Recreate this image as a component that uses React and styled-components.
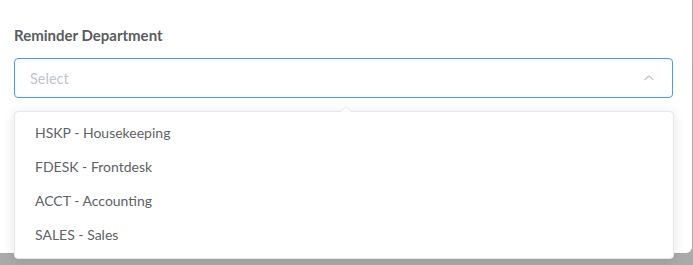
import React, { useState } from 'react';
import styled, { createGlobalStyle } from 'styled-components';

const GlobalStyle = createGlobalStyle`
    html, body {
        margin: 0;
        padding: 0;
        background: #ffffff;
        font-family: Lato, "Open Sans", sans-serif;
    }
`;

const Page = styled.div`
    min-height: 265px;
    background: #aaaaaa;
`;

const Panel = styled.div`
    position: relative;
    width: 692px;
    height: 253px;
    background: #ffffff;
    border-radius: 0 0 6px 0;
    padding: 25px 19px 0 14px;
    box-sizing: border-box;
`;

const Label = styled.div`
    font-size: 15px;
    font-weight: 700;
    color: #5a5c60;
    line-height: 20px;
    margin-bottom: 13px;
`;

const SelectBox = styled.div`
    position: relative;
    height: 40px;
    border: 1px solid ${props => (props.$open ? '#409eff' : '#dcdfe6')};
    border-radius: 4px;
    box-sizing: border-box;
    display: flex;
    align-items: center;
    justify-content: space-between;
    padding: 0 17px 0 15px;
    cursor: pointer;
`;

const Placeholder = styled.span`
    font-size: 14.5px;
    color: #c0c4cc;
`;

const Chevron = styled.svg`
    width: 12px;
    height: 12px;
    color: #c0c4cc;
`;

const Dropdown = styled.ul`
    position: absolute;
    top: 52px;
    left: -1px;
    right: -2px;
    margin: 0;
    padding: 4px 0 6px 0;
    list-style: none;
    background: #ffffff;
    border: 1px solid #e4e7ed;
    border-radius: 4px;
    box-shadow: 0 2px 12px rgba(0, 0, 0, 0.1);
    z-index: 10;

    &::before,
    &::after {
        content: '';
        position: absolute;
        left: 325px;
        width: 0;
        height: 0;
        border: 6px solid transparent;
        border-top-width: 0;
    }
    &::before {
        top: -6px;
        border-bottom-color: #e4e7ed;
    }
    &::after {
        top: -5px;
        border-bottom-color: #ffffff;
    }
`;

const Option = styled.li`
    height: 34px;
    line-height: 34px;
    padding: 0 20px;
    font-size: 14px;
    color: #606266;
    cursor: pointer;
    &:hover {
        background: #f5f7fa;
    }
`;

const departments = [
    'HSKP - Housekeeping',
    'FDESK - Frontdesk',
    'ACCT - Accounting',
    'SALES - Sales',
];

export default function App() {
    const [open, setOpen] = useState(true);

    return (
        <Page>
            <GlobalStyle />
            <Panel>
                <Label>Reminder Department</Label>
                <SelectBox $open={open} onClick={() => setOpen(o => !o)}>
                    <Placeholder>Select</Placeholder>
                    <Chevron viewBox="0 0 12 12" fill="none">
                        <path d="M1.5 8 L6 3.8 L10.5 8" stroke="currentColor" strokeWidth="1.2" />
                    </Chevron>
                    {open && (
                        <Dropdown>
                            {departments.map((d, index) => (
                                <Option key={index}>{d}</Option>
                            ))}
                        </Dropdown>
                    )}
                </SelectBox>
            </Panel>
        </Page>
    );
}
